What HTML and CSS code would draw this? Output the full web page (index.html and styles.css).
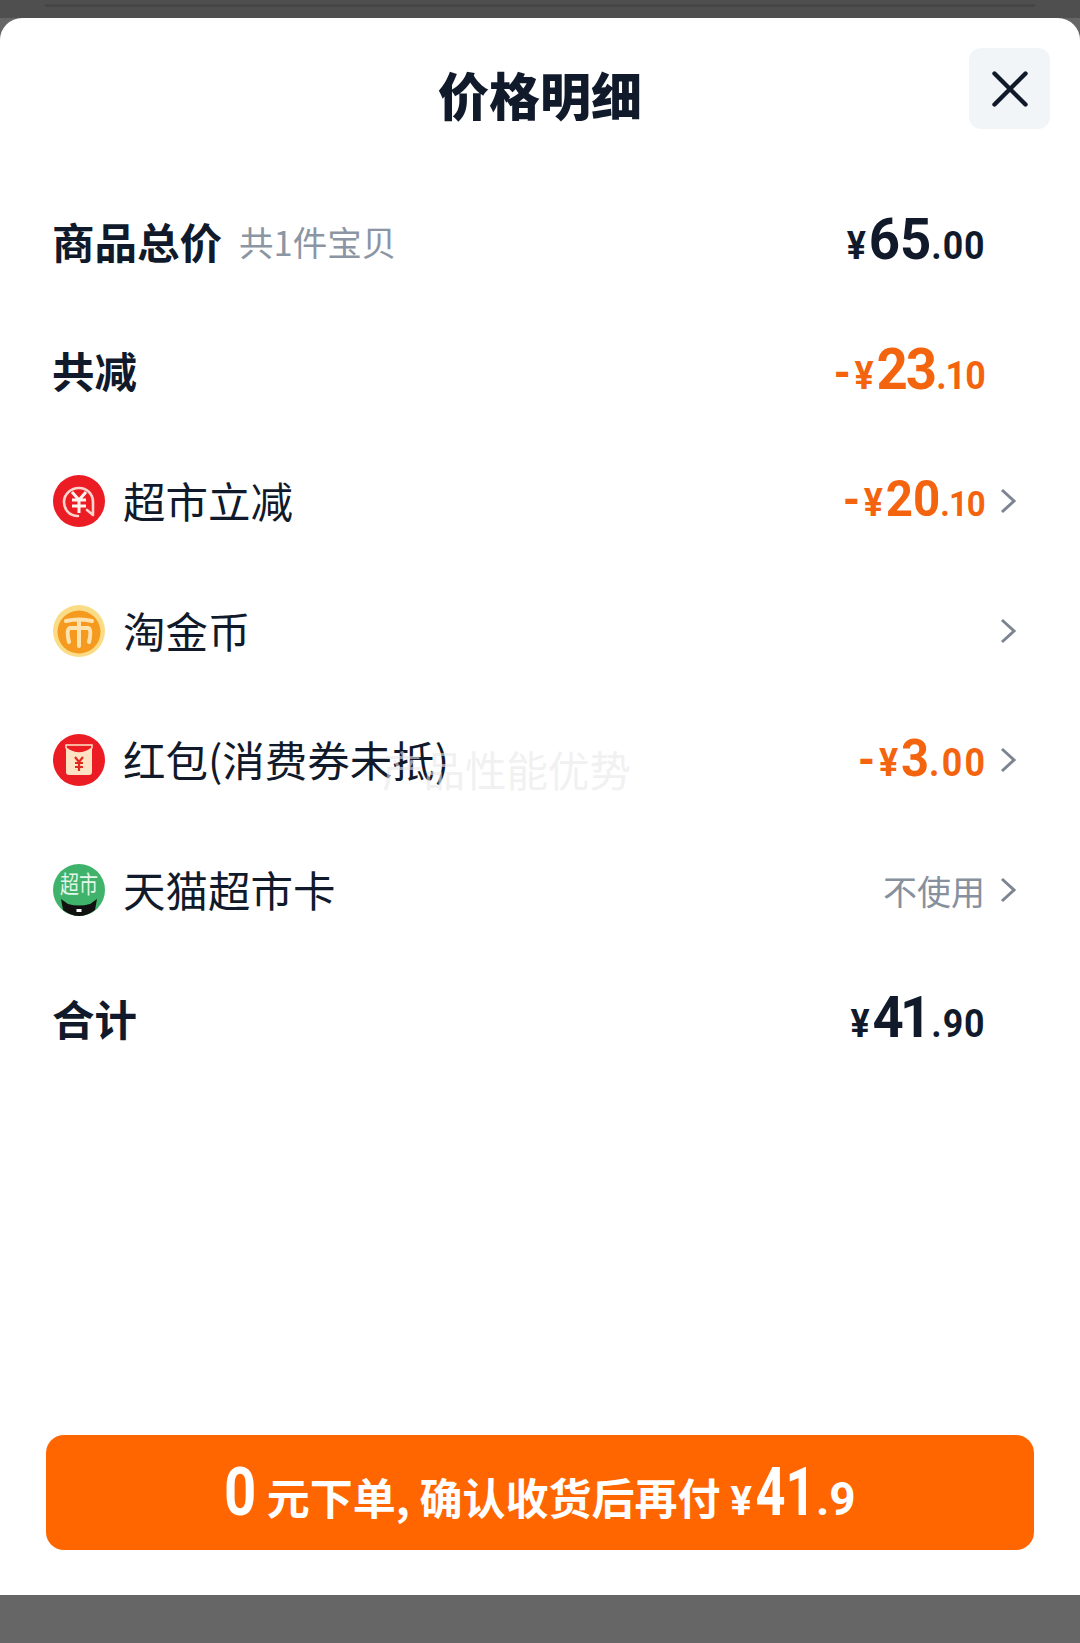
FILE: index.html
```html
<!DOCTYPE html>
<html lang="zh-CN">
<head>
  <meta charset="UTF-8" />
  <meta name="viewport" content="width=device-width, initial-scale=1.0" />
  <title>价格明细</title>
  <link rel="stylesheet" href="styles.css">
</head>
<body>
  <div class="page-top"><div class="page-top-line"></div></div>

  <div class="sheet">
    <header class="sheet-head">
      <h1>价格明细</h1>
      <button class="close" type="button" aria-label="关闭">
        <svg viewBox="0 0 36 36" width="36" height="36"><path d="M2.5 2.5 L33.5 33.5 M33.5 2.5 L2.5 33.5" fill="none" stroke="#111a2b" stroke-width="4.4" stroke-linecap="round"/></svg>
      </button>
    </header>

    <div class="rows">
      <div class="row">
        <div class="label strong">商品总价<span class="sub">共1件宝贝</span></div>
        <div class="price"><span class="yen">¥</span><span class="big">65</span><span class="small">.00</span></div>
        <span class="arrow"></span>
      </div>

      <div class="row">
        <div class="label strong">共减</div>
        <div class="price orange"><span class="minus">-</span><span class="yen">¥</span><span class="big tight2">23</span><span class="small tight">.10</span></div>
        <span class="arrow"></span>
      </div>

      <div class="row">
        <div class="label">
          <svg class="icon" viewBox="0 0 52 52">
            <circle cx="26" cy="26" r="26" fill="#ec1c24"/>
            <path d="M25 41 C16 41 11 34 11 27 C11 19 18 13 26 13 C34 13 40 19 40 27 V39 M40 40 L34 35" fill="none" stroke="#fbd5cd" stroke-width="2.6" stroke-linecap="round"/>
            <path d="M19 17 L26 25 L33 17 M19 25 H33 M19 31 H33 M26 25 V38" fill="none" stroke="#fff3ee" stroke-width="3"/>
          </svg>
          超市立减
        </div>
        <div class="price orange mid"><span class="minus">-</span><span class="yen">¥</span><span class="big">20</span><span class="small tight">.10</span></div>
        <svg class="arrow" viewBox="0 0 18 28"><path d="M3 3 L15 14 L3 25" fill="none" stroke="#7d8492" stroke-width="3"/></svg>
      </div>

      <div class="row">
        <div class="label">
          <svg class="icon" viewBox="0 0 52 52">
            <circle cx="26" cy="26" r="26" fill="#fbdc86"/>
            <circle cx="26" cy="27" r="21.5" fill="#f59a1e"/>
            <path d="M13 16 Q26 13 39 16 M26 15 V41 M16 37 Q13 24 17 23 H35 Q39 24 36 37" fill="none" stroke="#fde3b0" stroke-width="4" stroke-linecap="round"/>
          </svg>
          淘金币
        </div>
        <div class="price"></div>
        <svg class="arrow" viewBox="0 0 18 28"><path d="M3 3 L15 14 L3 25" fill="none" stroke="#7d8492" stroke-width="3"/></svg>
      </div>

      <div class="row">
        <div class="label">
          <svg class="icon" viewBox="0 0 52 52">
            <circle cx="26" cy="26" r="26" fill="#ec1c24"/>
            <rect x="13" y="11" width="26" height="30" rx="3" fill="#fde3c4"/>
            <path d="M13 14 Q26 24 39 14 V11 H13 Z" fill="#ec1c24" stroke="#fde3c4" stroke-width="1.5"/>
            <path d="M22 23 L26 28 L30 23 M22 29 H30 M22 33 H30 M26 28 V37" fill="none" stroke="#e0291f" stroke-width="2.2"/>
          </svg>
          红包(消费券未抵)
        </div>
        <div class="price orange low"><span class="minus">-</span><span class="yen">¥</span><span class="big">3</span><span class="small wide">.00</span></div>
        <svg class="arrow" viewBox="0 0 18 28"><path d="M3 3 L15 14 L3 25" fill="none" stroke="#7d8492" stroke-width="3"/></svg>
      </div>

      <div class="row">
        <div class="label">
          <svg class="icon" viewBox="0 0 52 52">
            <circle cx="26" cy="26" r="26" fill="#3fb36b"/>
            <text class="icon-text" transform="translate(26 29) scale(1 1.25)" text-anchor="middle">超市</text>
            <path d="M8 35 L15 40 Q26 43 37 40 L44 35 L42 46 Q34 52 26 52 Q18 52 10 46 Z" fill="#111"/>
            <rect x="23.5" y="45" width="5" height="3" fill="#fff"/>
          </svg>
          天猫超市卡
        </div>
        <div class="hint">不使用</div>
        <svg class="arrow" viewBox="0 0 18 28"><path d="M3 3 L15 14 L3 25" fill="none" stroke="#7d8492" stroke-width="3"/></svg>
      </div>

      <div class="row">
        <div class="label strong">合计</div>
        <div class="price"><span class="yen">¥</span><span class="big tight">41</span><span class="small">.90</span></div>
        <span class="arrow"></span>
      </div>
    </div>

    <button class="pay" type="button">
      <span class="pay-zero">0</span><span class="pay-text">元下单, 确认收货后再付</span><span class="pay-yen">¥</span><span class="pay-total">41</span><span class="pay-small">.9</span>
    </button>
  </div>

  <div class="toast">产品性能优势</div>
</body>
</html>
```

FILE: styles.css
```css
* { box-sizing: border-box; }
html, body { height: 100%; }
body {
  margin: 0;
  height: 1643px;
  overflow: hidden;
  position: relative;
  display: flex;
  flex-direction: column;
  background: #666;
  color: #111a2b;
  font-family: "Noto Sans CJK SC", "Noto Sans", sans-serif;
}

.page-top { height: 18px; background: #4f4f4f; padding: 4px 45px 0; }
.page-top-line { height: 3px; background: #464646; }

.sheet {
  height: 1577px;
  background: #fff;
  border-radius: 22px 22px 0 0;
  display: flex;
  flex-direction: column;
  padding-bottom: 45px;
}

.sheet-head {
  height: 160px;
  padding: 30px 30px 0 0;
  display: flex;
  justify-content: flex-end;
  position: relative;
}
.sheet-head h1 {
  position: absolute;
  left: 0;
  right: 0;
  top: 39px;
  margin: 0;
  text-align: center;
  font-size: 51px;
  line-height: 74px;
  font-weight: 900;
}
.close {
  width: 81px;
  height: 81px;
  border: none;
  border-radius: 12px;
  background: #f2f5f8;
  display: flex;
  align-items: center;
  justify-content: center;
  padding: 0;
}

.rows { flex: 1; }
.row {
  height: 129.6px;
  padding: 0 63px 0 53px;
  display: grid;
  grid-template-columns: 1fr auto 32px;
  align-items: center;
}
.label {
  display: flex;
  align-items: center;
  padding-bottom: 4px;
  font-size: 42.5px;
  line-height: 60px;
  font-weight: 400;
  white-space: nowrap;
}
.label.strong { font-weight: 700; margin-left: -1px; }
.sub {
  margin-left: 17px;
  font-size: 34.5px;
  font-weight: 400;
  color: #8b95a3;
}
.icon { width: 52px; height: 52px; margin: 2px 18px 0 0; flex: none; }
.icon-text { font-size: 19px; fill: #e4f6ea; }

/* no condensed face installed, so the figures are squeezed from the right edge */
.price {
  display: flex;
  align-items: baseline;
  font-family: "Roboto", sans-serif;
  font-weight: 700;
  color: #111a2b;
  line-height: 60px;
  transform: scaleX(0.94);
  transform-origin: right center;
}
.price .yen { font-size: 38px; margin-right: 3px; }
.price .minus { font-size: 46px; margin-right: 4px; }
.price .big { font-size: 58px; }
.price .small { font-size: 38px; letter-spacing: 1px; margin-right: -1px; }
.price .small.tight { letter-spacing: -1px; margin-right: 0; }
.price .small.wide { letter-spacing: 2.5px; margin-right: -2.5px; }
.price .big.tight { letter-spacing: -4px; margin-right: 4px; }
.price .big.tight2 { letter-spacing: -2px; margin-right: 1px; }
.price.orange { color: #f4640f; }
.price.mid .big { font-size: 50.5px; }
.price.low .big { font-size: 52px; }
.price.mid .small { font-size: 35px; }
.hint { font-size: 34px; color: #87909d; }
.arrow { width: 18px; height: 28px; justify-self: end; margin-top: -2px; }

.pay {
  margin: 0 46px;
  height: 115px;
  border: none;
  border-radius: 18px;
  background: #ff6600;
  color: #fff;
  display: flex;
  align-items: baseline;
  justify-content: center;
  padding: 17px 0 0;
  font-family: "Noto Sans CJK SC", sans-serif;
  font-weight: 700;
}
.pay-zero, .pay-total, .pay-yen, .pay-small { font-family: "Roboto", sans-serif; }
.pay-zero, .pay-total { display: inline-block; font-size: 67px; line-height: 80px; }
.pay-zero { margin: 0 -3px; transform: scaleX(0.84); }
.pay-total { margin: 0 -8px; transform: scaleX(0.78); }
.pay-text { font-size: 43px; margin: 0 10px; }
.pay-yen { font-size: 40px; margin-right: 3px; }
.pay-small { font-size: 46px; }

/* faded toast sitting over the red packet row */
.toast {
  position: absolute;
  left: 382px;
  top: 739px;
  font-size: 41.5px;
  line-height: 60px;
  color: rgba(232, 232, 232, 0.6);
  white-space: nowrap;
}
```
